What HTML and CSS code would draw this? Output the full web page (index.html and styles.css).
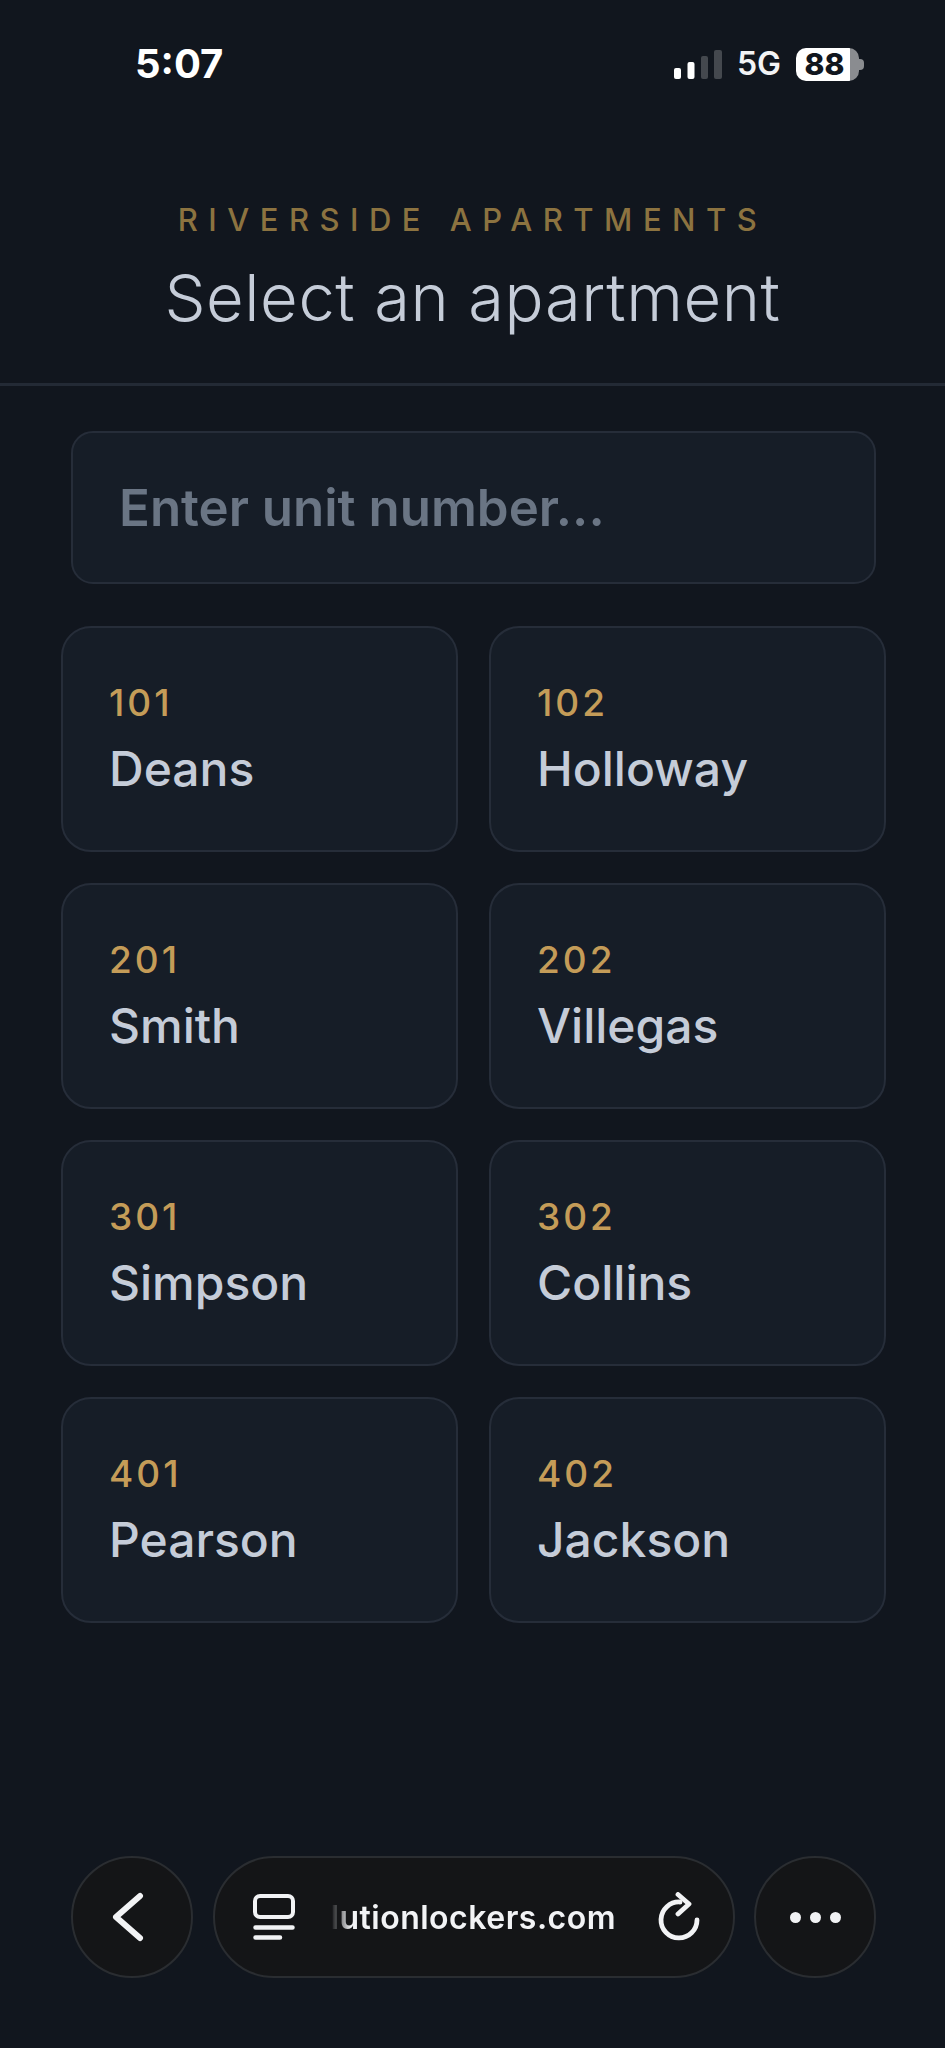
FILE: index.html
```html
<!DOCTYPE html>
<html lang="en">
<head>
<meta charset="utf-8">
<title>Select an apartment</title>
<link rel="stylesheet" href="styles.css">
</head>
<body>
<div class="page">
  <div class="status">
    <span class="time">5:07</span>
    <div class="status-right">
      <svg class="signal" width="48" height="30" viewBox="0 0 48 30">
        <rect x="0" y="19" width="7" height="11" rx="2" fill="#fff"/>
        <rect x="13.500" y="13" width="7" height="17" rx="2" fill="#fff"/>
        <rect x="27" y="7" width="7" height="23" rx="2" fill="#44484e"/>
        <rect x="40" y="1" width="8" height="29" rx="2" fill="#44484e"/>
      </svg>
      <span class="net">5G</span>
      <div class="battery"><div class="battery-body"><span class="battery-num">88</span></div><div class="battery-cap"></div></div>
    </div>
  </div>
  <header class="head">
    <div class="eyebrow">RIVERSIDE APARTMENTS</div>
    <h1 class="title">Select an apartment</h1>
  </header>
  <main class="main">
    <div class="search">Enter unit number...</div>
    <div class="grid">
      <div class="card"><div class="unit">101</div><div class="name">Deans</div></div>
      <div class="card"><div class="unit">102</div><div class="name">Holloway</div></div>
      <div class="card"><div class="unit">201</div><div class="name">Smith</div></div>
      <div class="card"><div class="unit">202</div><div class="name">Villegas</div></div>
      <div class="card"><div class="unit">301</div><div class="name">Simpson</div></div>
      <div class="card"><div class="unit">302</div><div class="name">Collins</div></div>
      <div class="card"><div class="unit">401</div><div class="name">Pearson</div></div>
      <div class="card"><div class="unit">402</div><div class="name">Jackson</div></div>
    </div>
  </main>
  <nav class="toolbar">
    <div class="round">
      <svg width="34" height="50" viewBox="0 0 34 50"><path d="M29 4 L5 25 L29 46" fill="none" stroke="#f2f3f5" stroke-width="6" stroke-linecap="round" stroke-linejoin="round"/></svg>
    </div>
    <div class="pill">
      <svg class="tabs" width="42" height="46" viewBox="0 0 42 46">
        <rect x="2" y="2" width="38" height="21" rx="5" fill="none" stroke="#f2f3f5" stroke-width="4"/>
        <path d="M2.500 33.500 H39.500 M2.500 43.500 H27" fill="none" stroke="#f2f3f5" stroke-width="4.500" stroke-linecap="round"/>
      </svg>
      <span class="url">lutionlockers.com</span>
      <svg class="reload" width="44" height="50" viewBox="0 0 44 50">
        <path d="M23 10 A18 18 0 1 0 40 28" fill="none" stroke="#f2f3f5" stroke-width="4.800" stroke-linecap="round"/>
        <path d="M21 2.500 L32 12 L21 22" fill="none" stroke="#f2f3f5" stroke-width="4.800" stroke-linecap="round" stroke-linejoin="round"/>
      </svg>
    </div>
    <div class="round">
      <div class="dots"><i class="dot"></i><i class="dot"></i><i class="dot"></i></div>
    </div>
  </nav>
</div>
</body>
</html>
```
FILE: styles.css
```css
* { box-sizing: border-box; }
html, body { margin: 0; padding: 0; background: #11161e; }
body { font-family: Inter, "Liberation Sans", sans-serif; }
.page { width: 945px; height: 2048px; display: flex; flex-direction: column; background: #11161e; overflow: hidden; }

.status { height: 96px; padding: 32px 81px 0 135px; display: flex; justify-content: space-between; align-items: center; color: #fff; }
.time { font-size: 40px; font-weight: 700; line-height: 1; }
.status-right { display: flex; align-items: center; }
.signal { overflow: visible; margin-right: 15px; }
.net { font-size: 32px; font-weight: 600; color: #f2f3f5; margin-right: 15px; line-height: 1; }
.battery { display: flex; align-items: center; }
.battery-body { width: 63px; height: 33px; border-radius: 10px; background: linear-gradient(90deg, #fff 0 86%, #8a8c90 86% 100%); display: flex; align-items: center; justify-content: center; }
.battery-num { color: #11161e; font-size: 30px; font-weight: 800; line-height: 1; margin-right: 6px; }
.battery-cap { width: 5px; height: 11px; background: #8a8c90; border-radius: 0 4px 4px 0; }

.head { height: 290px; padding-top: 108px; border-bottom: 3px solid #232a35; text-align: center; }
.eyebrow { font-size: 31px; line-height: 32px; font-weight: 500; letter-spacing: 10.500px; color: #8c7340; }
.title { margin: 26px 0 0; font-size: 65px; line-height: 72px; font-weight: 350; letter-spacing: 0.600px; color: #c5ccd8; }

.main { flex: 1; padding: 45px 60px 0 61px; }
.search { margin: 0 9px 42px 10px; height: 153px; background: #161d27; border: 2px solid #262d39; border-radius: 22px; padding-left: 46px; display: flex; align-items: center; font-size: 51px; font-weight: 600; color: #6a7584; }
.grid { display: grid; grid-template-columns: 397px 397px; column-gap: 31px; row-gap: 31px; }
.card { height: 226px; background: #161d27; border: 2px solid #262d39; border-radius: 30px; padding: 55px 46px 0; }
.unit { font-size: 37px; line-height: 40px; font-weight: 500; letter-spacing: 3px; color: #c49c58; }
.name { margin-top: 18px; font-size: 48px; line-height: 56px; font-weight: 550; color: #c5ccd8; }

.toolbar { height: 192px; padding: 0 69px 70px 71px; display: flex; justify-content: space-between; align-items: flex-start; }
.round { width: 122px; height: 122px; border-radius: 50%; background: #141517; border: 2px solid #2a2d31; display: flex; align-items: center; justify-content: center; }
.round svg { margin-right: 9px; }
.pill { width: 522px; height: 122px; border-radius: 61px; background: #141517; border: 2px solid #2a2d31; display: flex; align-items: center; padding: 0 32px 0 38px; }
.tabs { flex: none; }
.url { flex: 1; margin-left: 36px; font-size: 32px; font-weight: 600; letter-spacing: 0.500px; color: #f2f3f5; -webkit-mask-image: linear-gradient(90deg, transparent 0, #000 20px); mask-image: linear-gradient(90deg, transparent 0, #000 20px); }
.reload { flex: none; }
.dots { display: flex; gap: 9px; }
.dot { width: 11px; height: 11px; border-radius: 50%; background: #f2f3f5; }
```
